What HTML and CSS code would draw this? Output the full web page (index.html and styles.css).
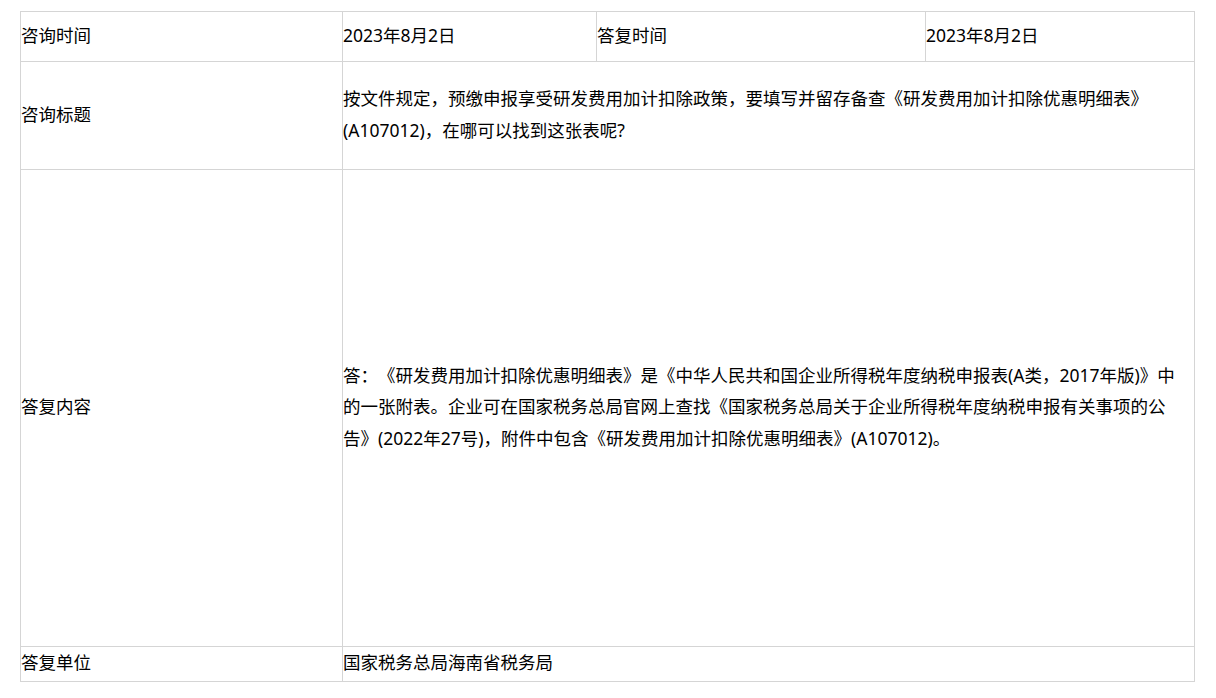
FILE: index.html
```html
<!DOCTYPE html>
<html lang="zh-CN">
<head>
<meta charset="utf-8">
<title>咨询详情</title>
<link rel="stylesheet" href="styles.css">
</head>
<body>
<div class="page">
  <table class="info">
    <colgroup>
      <col class="c1">
      <col class="c2">
      <col class="c3">
      <col class="c4">
    </colgroup>
    <tr class="r1">
      <td>咨询时间</td>
      <td>2023年8月2日</td>
      <td>答复时间</td>
      <td>2023年8月2日</td>
    </tr>
    <tr class="r2">
      <td>咨询标题</td>
      <td colspan="3">按文件规定，预缴申报享受研发费用加计扣除政策，要填写并留存备查《研发费用加计扣除优惠明细表》(A107012)，在哪可以找到这张表呢?</td>
    </tr>
    <tr class="r3">
      <td>答复内容</td>
      <td colspan="3">答：《研发费用加计扣除优惠明细表》是《中华人民共和国企业所得税年度纳税申报表(A类，2017年版)》中的一张附表。企业可在国家税务总局官网上查找《国家税务总局关于企业所得税年度纳税申报有关事项的公告》(2022年27号)，附件中包含《研发费用加计扣除优惠明细表》(A107012)。</td>
    </tr>
    <tr class="r4">
      <td>答复单位</td>
      <td colspan="3">国家税务总局海南省税务局</td>
    </tr>
  </table>
</div>
</body>
</html>
```

FILE: styles.css
```css
html, body {
  margin: 0;
  padding: 0;
  background: #ffffff;
}

.page {
  padding: 11px 0 0 20px;
}

.info {
  border-collapse: collapse;
  table-layout: fixed;
  width: 1174px;
  font-family: "Noto Sans", "Noto Sans CJK SC", "Microsoft YaHei", sans-serif;
  font-size: 17.5px;
  line-height: 31.5px;
  color: #000000;
  text-spacing-trim: space-all;
}

.c1 { width: 322px; }
.c2 { width: 254px; }
.c3 { width: 329px; }
.c4 { width: 269px; }

.info td {
  border: 1px solid #d5d5d5;
  padding: 0 6px 2px 0;
  vertical-align: middle;
  word-break: normal;
}

.r1 td { height: 47px; }
.r2 td { height: 105px; }
.r3 td { height: 474px; }
.r4 td { height: 32px; }
```
